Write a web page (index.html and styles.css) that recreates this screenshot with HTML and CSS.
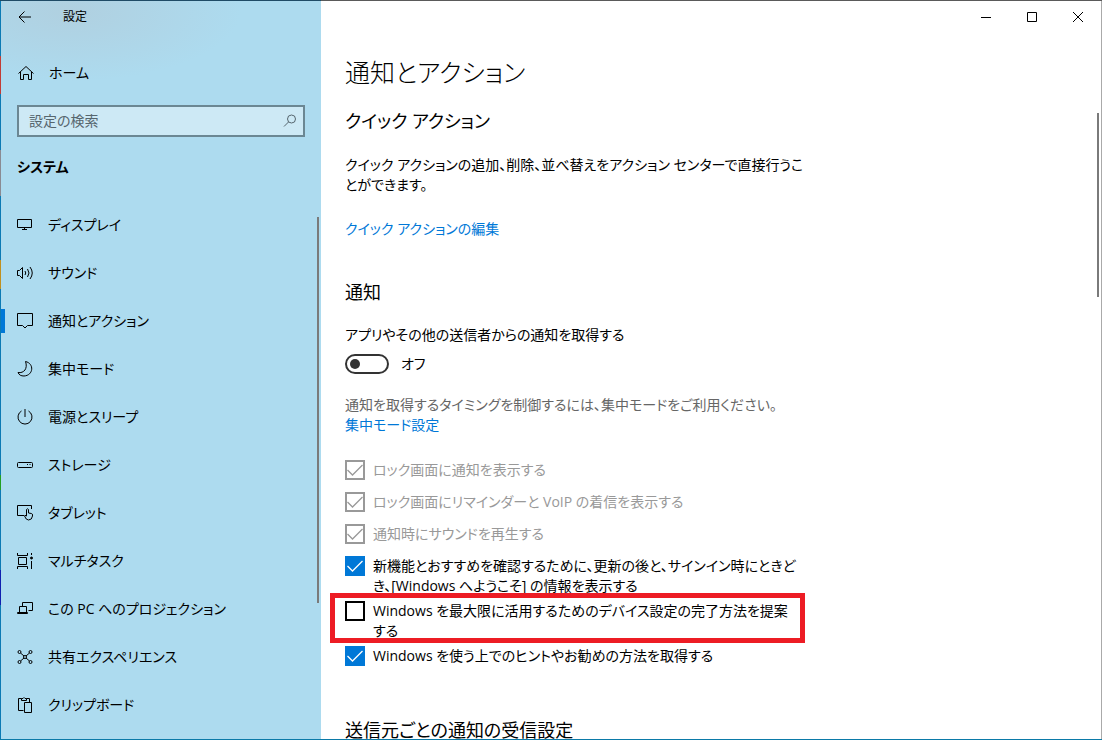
FILE: index.html
```html
<!DOCTYPE html>
<html lang="ja">
<head>
  <meta charset="UTF-8" />
  <meta name="viewport" content="width=device-width, initial-scale=1" />
  <title>設定</title>
  <link rel="stylesheet" href="styles.css">
</head>
<body>
  <div class="window">
    <aside class="sidebar">
      <div class="titlebar">
        <button class="back" aria-label="戻る">
          <svg width="14" height="14" viewBox="0 0 14 14"><path d="M13 7H1.500M6.500 1.500L1 7l5.500 5.500" /></svg>
        </button>
        <span>設定</span>
      </div>

      <a class="nav-item home" href="#">
        <svg width="18" height="18" viewBox="0 0 18 18"><path d="M1.500 9.500L9 2.500l7.500 7M3.500 8v7.500h3v-5h5v5h3V8" /></svg>
        <span>ホーム</span>
      </a>

      <div class="search">
        <input type="text" placeholder="設定の検索" aria-label="設定の検索" />
        <svg width="14" height="14" viewBox="0 0 14 14"><circle cx="8.500" cy="5" r="4" /><path d="M5.500 8L1 12.500" /></svg>
      </div>

      <h2 class="category">システム</h2>

      <nav class="nav">
        <a class="nav-item" href="#">
          <svg width="18" height="18" viewBox="0 0 18 18"><path d="M1.500 3.500h14v8h-14zM8.500 11.500v2M6 13.500h5" /></svg>
          <span>ディスプレイ</span>
        </a>
        <a class="nav-item" href="#">
          <svg width="18" height="18" viewBox="0 0 18 18"><path d="M1.500 6.500h2l3-3v11l-3-3h-2zM9 7q1.500 2 0 4M11.500 5q3 4 0 8M14 3q4.500 6 0 12" /></svg>
          <span>サウンド</span>
        </a>
        <a class="nav-item selected" href="#">
          <svg width="18" height="18" viewBox="0 0 18 18"><path d="M1.500 1.500h15v12h-5L9 16l-2.500-2.500h-5z" /></svg>
          <span>通知とアクション</span>
        </a>
        <a class="nav-item" href="#">
          <svg width="18" height="18" viewBox="0 0 18 18"><path d="M9.500 1.500c9 2 8 14-1.500 14.500c-3 0-5-1-6-3.500c6 1 10-4 7.500-11z" /></svg>
          <span>集中モード</span>
        </a>
        <a class="nav-item" href="#">
          <svg width="18" height="18" viewBox="0 0 18 18"><path d="M5.500 3a7 7 0 1 0 7 0M9 1v8" /></svg>
          <span>電源とスリープ</span>
        </a>
        <a class="nav-item" href="#">
          <svg width="18" height="18" viewBox="0 0 18 18"><rect x="1.500" y="6.500" width="15" height="5" rx="1" /><path d="M11 8.500h1M13.500 8.500h1" /></svg>
          <span>ストレージ</span>
        </a>
        <a class="nav-item" href="#">
          <svg width="18" height="18" viewBox="0 0 18 18"><path d="M8 11.500H1.500v-10h14V5M10.500 12V5.500q1-1.500 2 0V9l3 .5q1 .3 1 1.500v1q-.5 4-4 4q-2.500 0-4-4q0-1.500 2 0" /></svg>
          <span>タブレット</span>
        </a>
        <a class="nav-item" href="#">
          <svg width="18" height="18" viewBox="0 0 18 18"><path d="M1.500 1v2.500h10V1M2.500 5.500h8v7h-8zM1.500 17v-2.500h10V17M15.500 1v2M15.500 9v8" /><circle cx="15.500" cy="6" r="1" class="dot" /></svg>
          <span>マルチタスク</span>
        </a>
        <a class="nav-item" href="#">
          <svg width="18" height="18" viewBox="0 0 18 18"><path d="M6.500 6V2.500h10v8h-4M3.500 12.500v-6h7v6M1.500 12.500h10v1h-10z" /></svg>
          <span>この PC へのプロジェクション</span>
        </a>
        <a class="nav-item" href="#">
          <svg width="18" height="18" viewBox="0 0 18 18"><circle cx="3.500" cy="4" r="1.500" /><circle cx="14.500" cy="4" r="1.500" /><circle cx="3.500" cy="14" r="1.500" /><circle cx="14.500" cy="14" r="1.500" /><circle cx="9" cy="9" r="1.500" /><path d="M4.500 5L8 8M13.500 5L10 8M4.500 13L8 10M13.500 13L10 10" /></svg>
          <span>共有エクスペリエンス</span>
        </a>
        <a class="nav-item" href="#">
          <svg width="18" height="18" viewBox="0 0 18 18"><path d="M7.500 14.500h-5v-12h3M10.500 2.500h3v4M5.500 4.500v-2h1.500q1-2 2 0h1.500v2zM8.500 6.500h7v10h-7z" /></svg>
          <span>クリップボード</span>
        </a>
      </nav>
      <div class="scroll-thumb"></div>
    </aside>

    <main class="main">
      <div class="controls">
        <button aria-label="最小化"><svg width="12" height="12" viewBox="0 0 12 12"><path d="M1 6.500h10" /></svg></button>
        <button aria-label="最大化"><svg width="12" height="12" viewBox="0 0 12 12"><path d="M1.500 1.500h9v9h-9z" /></svg></button>
        <button aria-label="閉じる"><svg width="12" height="12" viewBox="0 0 12 12"><path d="M1 1l10 10M11 1L1 11" /></svg></button>
      </div>

      <div class="content">
        <h1>通知とアクション</h1>

        <section class="quick">
          <h2>クイック アクション</h2>
          <p>クイック アクションの追加、削除、並べ替えをアクション センターで直接行うこ<br>とができます。</p>
          <a href="#">クイック アクションの編集</a>
        </section>

        <section class="notify">
          <h2>通知</h2>
          <label for="notifyToggle">アプリやその他の送信者からの通知を取得する</label>
          <div class="toggle-row">
            <input type="checkbox" role="switch" class="toggle" id="notifyToggle" />
            <span>オフ</span>
          </div>
          <p class="hint">通知を取得するタイミングを制御するには、集中モードをご利用ください。</p>
          <a href="#">集中モード設定</a>

          <div class="options">
            <label class="option disabled"><input type="checkbox" checked disabled /><span>ロック画面に通知を表示する</span></label>
            <label class="option disabled"><input type="checkbox" checked disabled /><span>ロック画面にリマインダーと VoIP の着信を表示する</span></label>
            <label class="option disabled"><input type="checkbox" checked disabled /><span>通知時にサウンドを再生する</span></label>
            <label class="option"><input type="checkbox" checked /><span>新機能とおすすめを確認するために、更新の後と、サインイン時にときど<br>き、[Windows へようこそ] の情報を表示する</span></label>
            <label class="option marked"><input type="checkbox" /><span>Windows を最大限に活用するためのデバイス設定の完了方法を提案<br>する</span></label>
            <label class="option"><input type="checkbox" checked /><span>Windows を使う上でのヒントやお勧めの方法を取得する</span></label>
          </div>
        </section>

        <section>
          <h2>送信元ごとの通知の受信設定</h2>
        </section>
      </div>
      <div class="scroll-thumb"></div>
    </main>
  </div>
</body>
</html>
```

FILE: styles.css
```css
*,
*::before,
*::after {
  box-sizing: border-box;
}

body {
  margin: 0;
  height: 100vh;
  overflow: hidden;
  /* desktop showing round the window */
  background:
    linear-gradient(to right, #1f4b66 321px, #5a5a5a 321px) top / 100% 1px no-repeat,
    linear-gradient(#0b7aa8, #0b7aa8) bottom / 100% 1px no-repeat,
    linear-gradient(#aaa, #aaa) right / 1px 100% no-repeat,
    linear-gradient(#0b7ab4 56px, #c23c35 56px 94px, #0b7ab4 94px 150px, #8a8a92 150px 196px, #0b7ab4 196px 260px, #c09020 260px 289px, #0b7ab4 289px 475px, #22a022 475px 490px, #0b7ab4 490px 570px, #1020b0 570px 605px, #0b7ab4 605px);
  color: #000;
  font-family: "Open Sans", "Noto Sans CJK JP", sans-serif;
  font-feature-settings: "palt";
  font-size: 14px;
  line-height: 20px;
}

h1,
h2,
p {
  margin: 0;
  font-weight: 400;
}

a {
  color: #0078d7;
  text-decoration: none;
}

button {
  display: flex;
  align-items: center;
  justify-content: center;
  padding: 0;
  border: none;
  background: none;
}

svg {
  flex: none;
  fill: none;
  stroke: #000;
  stroke-width: 1;
}

.dot {
  fill: #000;
}

.window {
  display: flex;
  height: 100vh;
  padding: 1px;
}

.sidebar {
  position: relative;
  flex: none;
  width: 320px;
  overflow: hidden;
  background: radial-gradient(ellipse 170px 70px at 70px 10px, #b0d0e0, #addbef);
}

.titlebar {
  display: flex;
  align-items: center;
  height: 32px;
  font-size: 12px;
}

.back {
  width: 48px;
  height: 32px;
  margin-right: 14px;
}

.nav-item {
  position: relative;
  display: flex;
  align-items: center;
  gap: 14px;
  height: 48px;
  padding-left: 15px;
  color: #000;
}

.home {
  margin: 16px 0 8px;
  padding-left: 16px;
}

.selected::before {
  content: "";
  position: absolute;
  left: 0;
  top: 12px;
  width: 4px;
  height: 24px;
  background-color: #0078d7;
}

.search {
  display: flex;
  align-items: center;
  height: 32px;
  margin: 0 16px;
  padding: 0 6px 0 10px;
  border: 2px solid #6b8793;
  background-color: #cde9f5;
}

.search input {
  flex: 1;
  min-width: 0;
  padding: 0;
  border: none;
  outline: none;
  background: none;
  font: inherit;
  font-feature-settings: inherit;
}

.search input::placeholder {
  color: #56666e;
}

.search svg {
  stroke: #56666e;
}

.category {
  margin: 20px 16px 24px;
  font-size: 14px;
  font-weight: 700;
}

.scroll-thumb {
  position: absolute;
  right: 2px;
  width: 2px;
  background-color: #7a7a7a;
}

.sidebar .scroll-thumb {
  top: 216px;
  height: 386px;
}

.main {
  position: relative;
  flex: 1;
  min-width: 0;
  overflow: hidden;
  background-color: #fff;
}

.main .scroll-thumb {
  top: 112px;
  height: 184px;
}

.controls {
  display: flex;
  justify-content: flex-end;
}

.controls button {
  width: 46px;
  height: 32px;
}

.content {
  padding: 21px 24px 0;
}

h1 {
  margin-bottom: 17px;
  font-size: 25px;
  font-weight: 300;
  line-height: 36px;
}

.content h2 {
  font-size: 18px;
  line-height: 28px;
}

.quick {
  margin-bottom: 39px;
}

.quick p {
  margin: 20px 0 24px;
}

.quick a,
.notify > a,
.notify > label {
  display: block;
}

.notify {
  margin-bottom: 38px;
}

.notify > label {
  margin: 19px 0 9px;
}

.toggle-row {
  display: flex;
  align-items: center;
  gap: 12px;
  margin-bottom: 21px;
}

.toggle {
  appearance: none;
  display: flex;
  align-items: center;
  width: 44px;
  height: 20px;
  margin: 0;
  padding-left: 3px;
  border: 2px solid #333;
  border-radius: 10px;
}

.toggle::before {
  content: "";
  width: 10px;
  height: 10px;
  border-radius: 50%;
  background-color: #333;
}

.hint {
  color: #666;
}

.options {
  margin-top: 25px;
}

.option {
  position: relative;
  display: flex;
  gap: 8px;
  min-height: 32px;
  padding-bottom: 5px;
}

.option input {
  appearance: none;
  flex: none;
  width: 20px;
  height: 20px;
  margin: 0;
  border: 2px solid #000;
}

.option input:checked {
  border: none;
  background: #0078d7 url("data:image/svg+xml,%3Csvg xmlns='http://www.w3.org/2000/svg' width='20' height='20'%3E%3Cpath d='M2.500 10l5 5L17.500 5' fill='none' stroke='%23fff' stroke-width='1.300'/%3E%3C/svg%3E");
}

.option input:disabled {
  border: 2px solid #999;
  background: url("data:image/svg+xml,%3Csvg xmlns='http://www.w3.org/2000/svg' width='20' height='20'%3E%3Cpath d='M2.500 10l5 5L17.500 5' fill='none' stroke='%23999' stroke-width='1.300'/%3E%3C/svg%3E") border-box;
}

.disabled {
  color: #999;
}

/* red frame round the highlighted option */
.marked::after {
  content: "";
  position: absolute;
  top: -8px;
  left: -15px;
  width: 475px;
  height: 50px;
  border: 5px solid #ed1c24;
}
```
